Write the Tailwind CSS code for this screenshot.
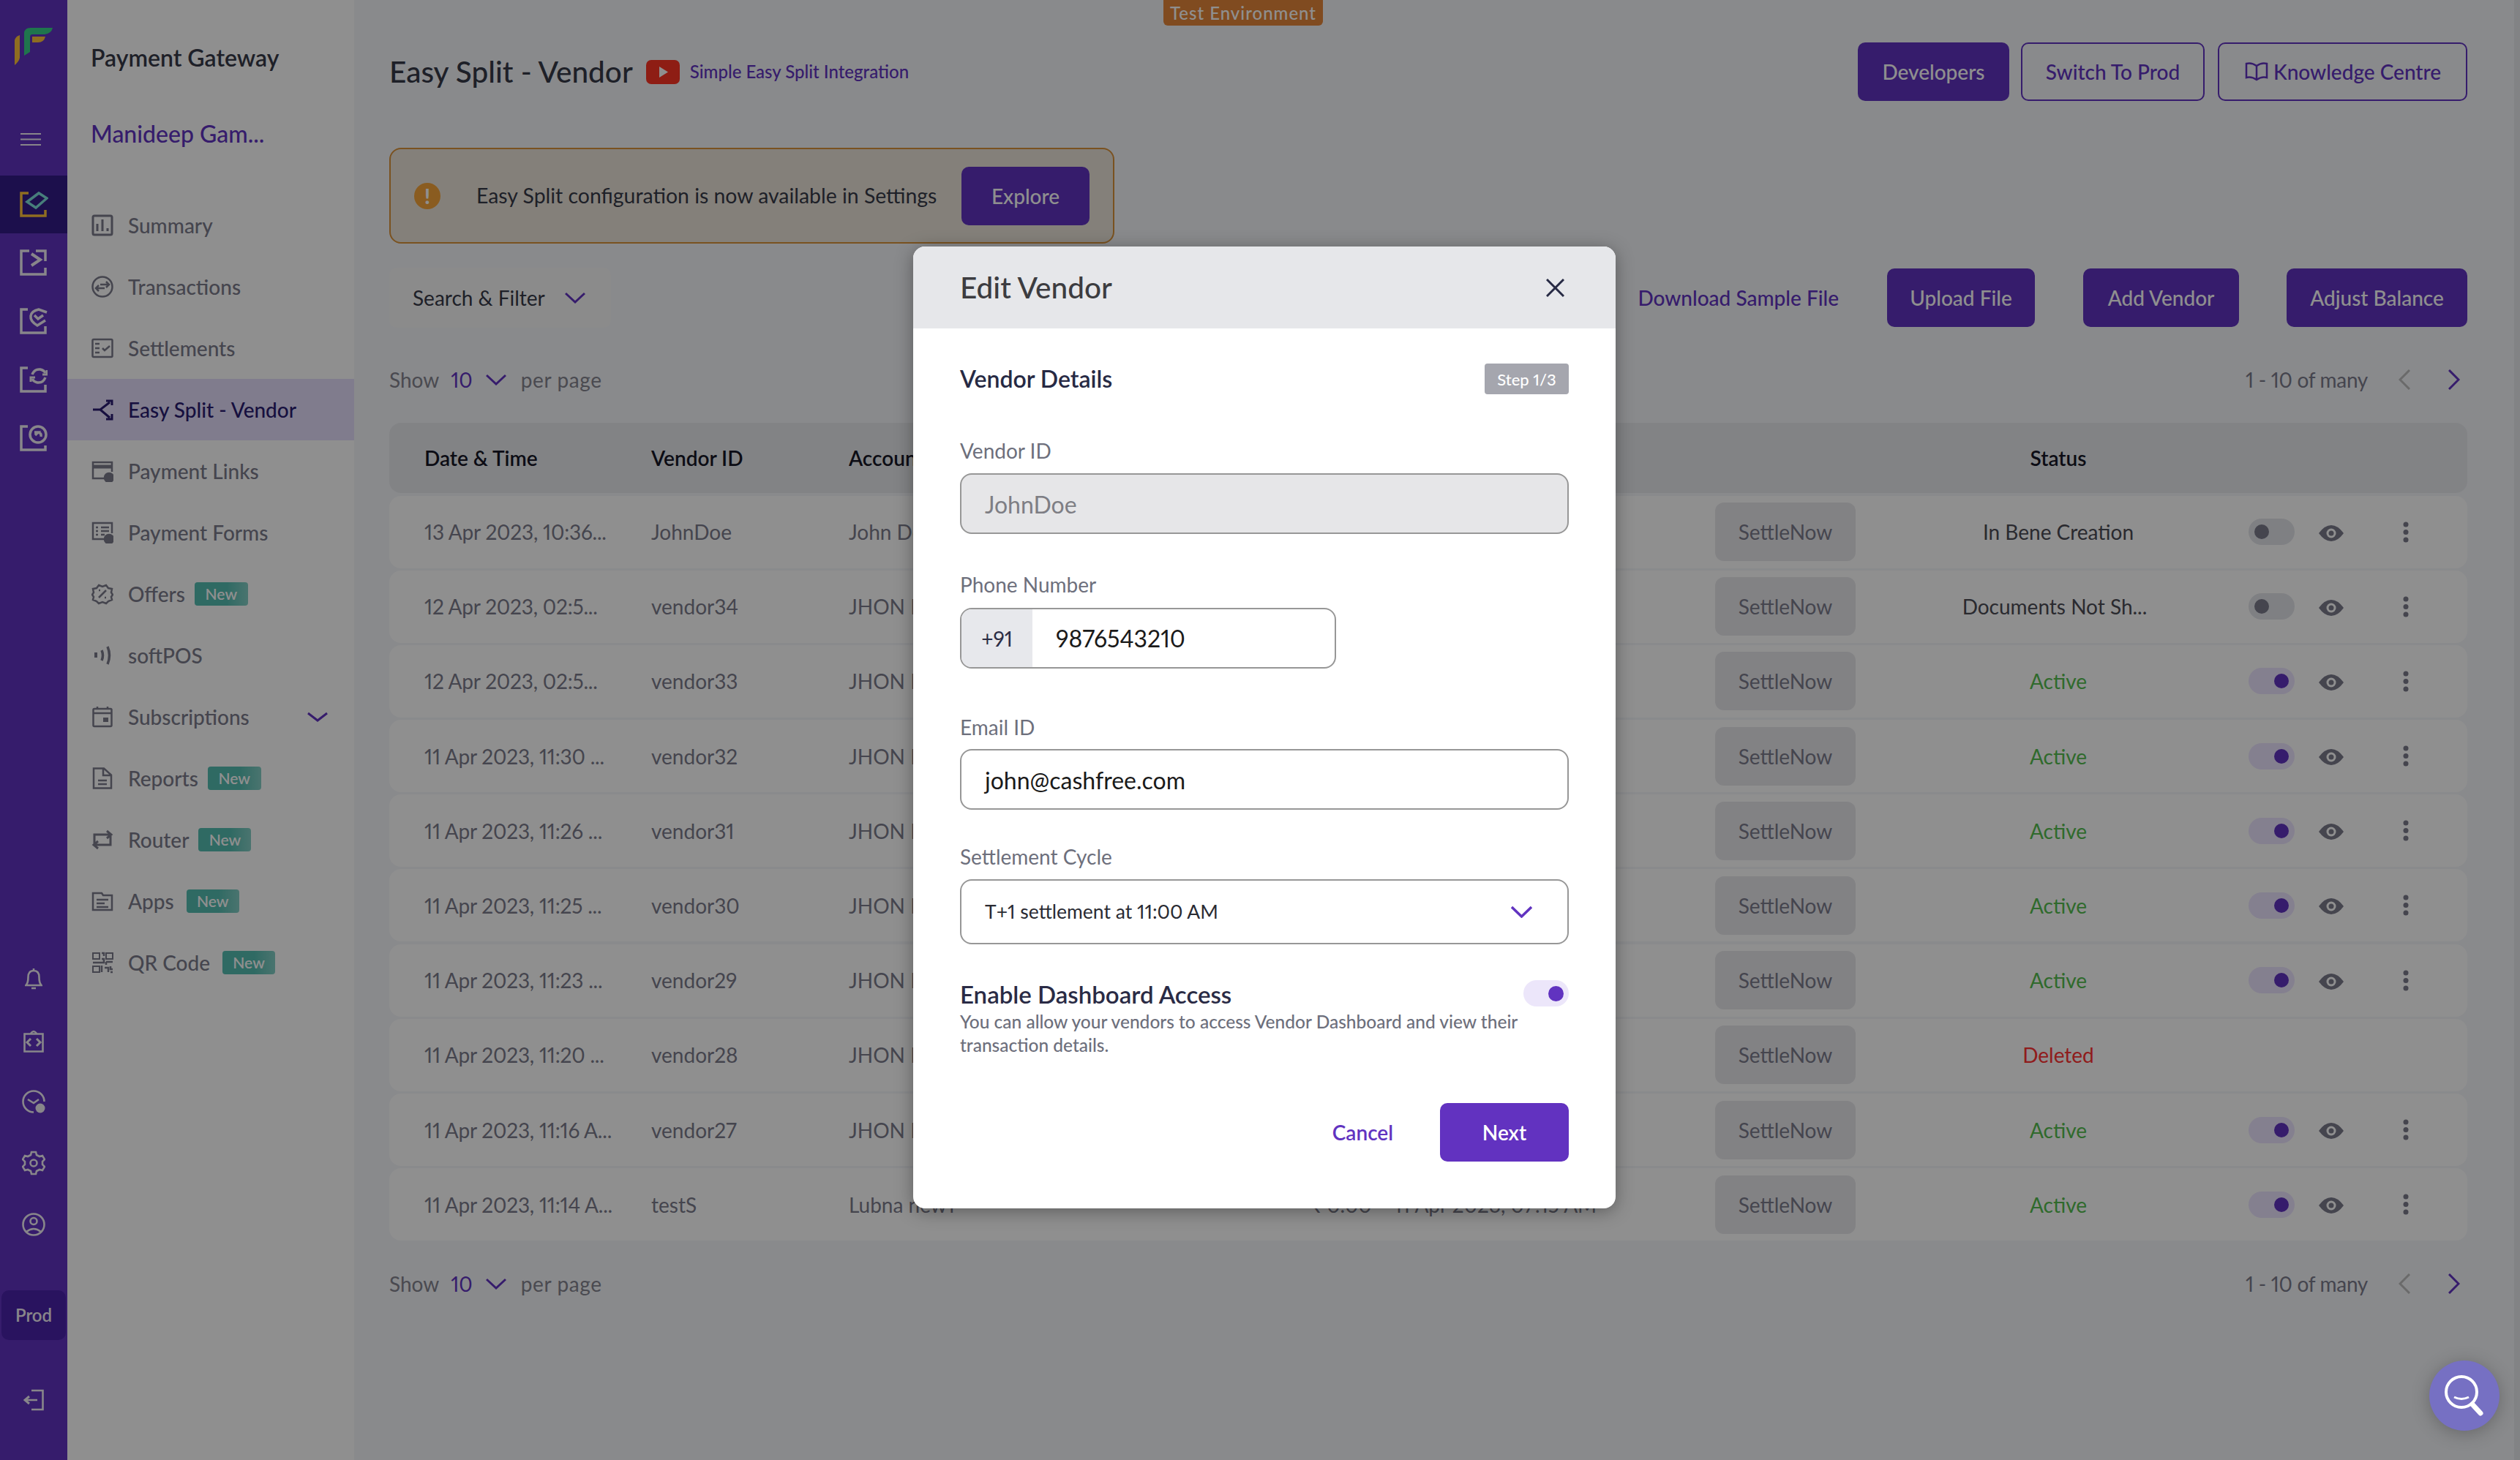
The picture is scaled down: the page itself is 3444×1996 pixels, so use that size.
<!DOCTYPE html>
<html lang="en">
<head>
    <meta charset="UTF-8">
    <meta name="viewport" content="width=device-width, initial-scale=1.0">
    <title>Easy Split - Vendor</title>
    <script src="https://cdn.jsdelivr.net/npm/@tailwindcss/browser@4"></script>
</head>
<body class="relative w-[3444px] h-[1996px] overflow-hidden flex bg-[#f5f6fa] font-['Lato','Liberation_Sans',sans-serif] proportional-nums text-[28px] text-[#7b7b8c]">

    <!-- icon rail -->
    <aside class="w-[92px] h-full bg-[#6133c0] flex flex-col shrink-0 text-[#f2eff7]">
        <svg class="ml-[20px] mt-[38px] w-[52px] h-[51px]" viewBox="0 0 52 51">
            <path d="M0 17 Q1 12 7 10 V41 Q6 46 0 51 Z" fill="#ffc23c"/>
            <path d="M13 8 Q13 0 22 0 H52 Q50 8 41 9 H24 Q21 9 21 13 V33 L13 38 Z" fill="#38d18a"/>
            <path d="M24 12 H42 Q40 20 32 20 H24 Z" fill="#ffc23c"/>
        </svg>
        <svg class="ml-[28px] mt-[92px] w-[28px] h-[19px]" viewBox="0 0 28 19" fill="none" stroke="currentColor" stroke-width="2.200"><path d="M0 2h28M0 9.500h28M0 17h28"/></svg>
        <div class="mt-[40px] h-[79px] bg-[#321b88] flex items-center justify-center">
            <svg class="w-[40px] h-[36px] -mt-[2px]" viewBox="0 0 40 36" fill="none" stroke-width="3.500"><path d="M13 3H3v31h33v-8" stroke="#ffc23c"/><path d="M11 15 27 3l11 7-15 13z" stroke="#7fe0dc"/></svg>
        </div>
        <div class="flex flex-col items-center gap-[44px] mt-[22px]">
            <svg class="w-[38px] h-[36px]" viewBox="0 0 38 36" fill="none" stroke="currentColor" stroke-width="3.500"><path d="M13 2H2v32h33v-9M22 2h13v14"/><path d="M16 6l12 8-12 8" stroke-width="4"/></svg>
            <svg class="w-[38px] h-[36px]" viewBox="0 0 38 36" fill="none" stroke="currentColor" stroke-width="3.500"><path d="M11 2H2v32h33v-9"/><path d="M37 6 26 2q-10 2-11 9t9 13l11-7"/><path d="M20 10l5 5 7-5"/></svg>
            <svg class="w-[38px] h-[36px]" viewBox="0 0 38 36" fill="none" stroke="currentColor" stroke-width="3.500"><path d="M11 2H2v32h33v-9"/><path d="M17 11q3-8 11-7 5 1 7 5M35 15q-3 8-11 7-5-1-7-5"/><path d="M31 11h6V5M21 15h-6v6" stroke-width="3"/></svg>
            <svg class="w-[38px] h-[36px]" viewBox="0 0 38 36" fill="none" stroke="currentColor" stroke-width="3.500"><path d="M11 2H2v32h33v-6"/><circle cx="25" cy="13" r="11"/><path d="M21 14l4-4h-5M25 10q5 1 4 6"/></svg>
        </div>
        <div class="mt-auto flex flex-col items-center">
            <div class="flex flex-col items-center gap-[51px]">
                <svg class="mb-[3px] w-[24px] h-[30px]" viewBox="0 0 24 30" fill="none" stroke="currentColor" stroke-width="2.600"><path d="M1.500 24q3-3 3-11 0-9 7.500-9t7.500 9q0 8 3 11zM9 28h6M12 1v3"/></svg>
                <svg class="w-[28px] h-[32px]" viewBox="0 0 28 32" fill="none" stroke="currentColor" stroke-width="2.600"><path d="M1.500 6.500h25v24h-25zM10 6q4-6 8 0"/><path d="M10 13l-5 5 5 5M18 13l5 5-5 5" stroke-width="3"/></svg>
                <svg class="w-[32px] h-[32px]" viewBox="0 0 32 32" fill="none" stroke="currentColor" stroke-width="2.600"><path d="M16 30.500A14.500 14.500 0 1 1 30.500 16"/><path d="M8 13l8 5 7-5"/><circle cx="25" cy="25" r="6.500" fill="currentColor" stroke="none"/></svg>
                <svg class="w-[32px] h-[34px]" viewBox="0 0 32 34" fill="none" stroke="currentColor" stroke-width="2.600"><path d="M13 2h6l1 4 4 2 4-1 3 5-3 3v4l3 3-3 5-4-1-4 2-1 4h-6l-1-4-4-2-4 1-3-5 3-3v-4l-3-3 3-5 4 1 4-2z"/><circle cx="16" cy="17" r="4.500"/></svg>
                <svg class="w-[32px] h-[32px]" viewBox="0 0 32 32" fill="none" stroke="currentColor" stroke-width="2.600"><circle cx="16" cy="16" r="14.500"/><circle cx="16" cy="11.500" r="4.500"/><path d="M6 26q10-8 20 0"/></svg>
            </div>
            <div class="mt-[74px] w-[88px] h-[68px] rounded-[10px] bg-[#4a22aa] flex items-center justify-center text-[24px] font-semibold">Prod</div>
            <svg class="mt-[67px] mb-[67px] w-[28px] h-[30px]" viewBox="0 0 28 30" fill="none" stroke="currentColor" stroke-width="2.600"><path d="M11 2h15.500v26H11M19 15H3"/><path d="M8 10l-6 5 6 5" stroke-width="3"/></svg>
        </div>
    </aside>

    <!-- section sidebar -->
    <nav class="w-[392px] h-full bg-white shrink-0 flex flex-col">
        <div class="pl-[32px] mt-[58px] h-[42px] flex items-center text-[32px] font-semibold text-[#373948]">Payment Gateway</div>
        <div class="pl-[32px] mt-[62px] h-[42px] flex items-center text-[32px] font-medium text-[#6133c0]">Manideep Gam...</div>
        <div class="mt-[62px] flex flex-col font-medium">
            <div class="h-[84px] pl-[33px] flex items-center gap-[20px]">
                <svg class="w-[30px] h-[30px]" viewBox="0 0 30 30" fill="none" stroke="currentColor" stroke-width="3"><rect x="2" y="2" width="26" height="26" rx="2"/><path d="M8 13v10M15 7v16M22 19v4"/></svg><span>Summary</span>
            </div>
            <div class="h-[84px] pl-[33px] flex items-center gap-[20px]">
                <svg class="w-[30px] h-[30px]" viewBox="0 0 30 30" fill="none" stroke="currentColor" stroke-width="2.500"><circle cx="15" cy="15" r="13.500"/><path d="M6 17h12M10 13l-4 4 4 4M12 12h12M20 8l4 4-4 4"/></svg><span>Transactions</span>
            </div>
            <div class="h-[84px] pl-[33px] flex items-center gap-[20px]">
                <svg class="w-[30px] h-[30px]" viewBox="0 0 30 30" fill="none" stroke="currentColor" stroke-width="2.500"><rect x="1.500" y="3" width="27" height="24" rx="1.500"/><path d="M5 9h6M5 15h6M5 21h6M15 15l3 3 7-6"/></svg><span>Settlements</span>
            </div>
            <div class="h-[84px] pl-[33px] flex items-center gap-[20px] bg-[#e4ddfc] text-[#291c70]">
                <svg class="w-[30px] h-[30px]" viewBox="0 0 30 30" fill="none" stroke="currentColor" stroke-width="3"><path d="M2 15h10l13-10M12 15l13 11M20 3h8v6M28 21v7h-8"/></svg><span>Easy Split - Vendor</span>
            </div>
            <div class="h-[84px] pl-[33px] flex items-center gap-[20px]">
                <svg class="w-[30px] h-[30px]" viewBox="0 0 30 30" fill="none" stroke="currentColor" stroke-width="2.500"><path d="M18 25H2V3h26v13M2 9h26" /><path d="M2 9h26" stroke-width="5"/><circle cx="24" cy="24" r="6" fill="currentColor"/></svg><span>Payment Links</span>
            </div>
            <div class="h-[84px] pl-[33px] flex items-center gap-[20px]">
                <svg class="w-[30px] h-[30px]" viewBox="0 0 30 30" fill="none" stroke="currentColor" stroke-width="2.500"><path d="M18 24H2V2h26v14"/><path d="M6 8h3M13 8h11M6 13h3M13 13h11M6 18h3M13 18h5"/><circle cx="24" cy="24" r="6" fill="currentColor"/></svg><span>Payment Forms</span>
            </div>
            <div class="h-[84px] pl-[33px] flex items-center gap-[20px]">
                <svg class="w-[30px] h-[30px]" viewBox="0 0 30 30" fill="none" stroke="currentColor" stroke-width="2.500"><path d="M10 3l5 2 5-2 3 4 5 1-1 5 2 3-2 3 1 4-5 2-3 3-5-2-5 2-3-3-5-2 1-4-2-3 2-3-1-5 5-1z"/><path d="M10 20l10-10M10 10h2M18 20h2"/></svg><span>Offers</span>
                <span class="-ml-[7px] w-[73px] h-[32px] rounded-[4px] bg-gradient-to-r from-[#54bdb1] from-60% to-[#84cfc6] flex items-center justify-center text-[21px] font-semibold text-white">New</span>
            </div>
            <div class="h-[84px] pl-[33px] flex items-center gap-[20px]">
                <svg class="w-[30px] h-[30px]" viewBox="0 0 30 30" fill="none" stroke="currentColor" stroke-width="3.500"><path d="M6 11v7" stroke-width="4"/><path d="M14 8q3 7 0 14M22 3q5 12 0 24"/></svg><span>softPOS</span>
            </div>
            <div class="h-[84px] pl-[33px] pr-[36px] flex items-center gap-[20px]">
                <svg class="w-[30px] h-[30px]" viewBox="0 0 30 30" fill="none" stroke="currentColor" stroke-width="2.500"><rect x="2.500" y="4" width="25" height="24" rx="1.500"/><path d="M2 10h26M8 1v4M22 1v4"/><rect x="16" y="16" width="7" height="6" fill="currentColor" stroke="none"/></svg><span>Subscriptions</span>
                <svg class="ml-auto w-[28px] h-[14px] text-[#6133c0]" viewBox="0 0 28 14" fill="none" stroke="currentColor" stroke-width="3"><path d="M1 2l13 10L27 2"/></svg>
            </div>
            <div class="h-[84px] pl-[33px] flex items-center gap-[20px]">
                <svg class="w-[30px] h-[30px]" viewBox="0 0 30 30" fill="none" stroke="currentColor" stroke-width="2.500"><path d="M3 1.500h14l10 9v18H3zM16 2v9h11M9 18h12M9 23h12"/></svg><span>Reports</span>
                <span class="-ml-[7px] w-[73px] h-[32px] rounded-[4px] bg-gradient-to-r from-[#54bdb1] from-60% to-[#84cfc6] flex items-center justify-center text-[21px] font-semibold text-white">New</span>
            </div>
            <div class="h-[84px] pl-[33px] flex items-center gap-[20px]">
                <svg class="w-[30px] h-[30px]" viewBox="0 0 30 30" fill="none" stroke="currentColor" stroke-width="3"><path d="M4 21V8h22M21 3l6 5-6 5M26 10v12H4M9 17l-6 5 6 5"/></svg><span>Router</span>
                <span class="-ml-[7px] w-[72px] h-[32px] rounded-[4px] bg-gradient-to-r from-[#54bdb1] from-60% to-[#84cfc6] flex items-center justify-center text-[21px] font-semibold text-white">New</span>
            </div>
            <div class="h-[84px] pl-[33px] flex items-center gap-[20px]">
                <svg class="w-[30px] h-[30px]" viewBox="0 0 30 30" fill="none" stroke="currentColor" stroke-width="2.500"><path d="M2 4h12l2 3h12v20H2zM7 13h16M7 18h11M7 23h16"/></svg><span>Apps</span>
                <span class="-ml-[3px] w-[72px] h-[32px] rounded-[4px] bg-gradient-to-r from-[#54bdb1] from-60% to-[#84cfc6] flex items-center justify-center text-[21px] font-semibold text-white">New</span>
            </div>
            <div class="h-[84px] pl-[33px] flex items-center gap-[20px]">
                <svg class="w-[30px] h-[30px]" viewBox="0 0 30 30" fill="none" stroke="currentColor" stroke-width="2"><rect x="2" y="2" width="9" height="8"/><rect x="20" y="2" width="9" height="8"/><rect x="2" y="20" width="9" height="8"/><path d="M14 2h3v4M14 10h3v5H2M20 14h9M20 14v4M14 19v9M18 22h5v6M26 20v4h3M26 28h3" stroke-width="2.500"/></svg><span>QR Code</span>
                <span class="-ml-[3px] w-[72px] h-[32px] rounded-[4px] bg-gradient-to-r from-[#54bdb1] from-60% to-[#84cfc6] flex items-center justify-center text-[21px] font-semibold text-white">New</span>
            </div>
        </div>
    </nav>

    <!-- main column -->
    <main class="flex-1 pl-[48px] pr-[64px] pt-[58px] min-w-0">
        <div class="flex items-center justify-between h-[80px]">
            <div class="flex items-center">
                <h1 class="text-[40.500px] font-medium text-[#373948]">Easy Split - Vendor</h1>
                <svg class="ml-[18px] w-[46px] h-[33px]" viewBox="0 0 46 33"><rect width="46" height="33" rx="7" fill="#fe3424"/><path d="M18 9l12 7.500L18 24z" fill="#fff"/></svg>
                <a class="ml-[14px] text-[24px] font-medium text-[#6133c0]">Simple Easy Split Integration</a>
            </div>
            <div class="flex items-center font-medium">
                <button class="w-[207px] h-[80px] rounded-[10px] bg-[#6133c0] text-white">Developers</button>
                <button class="ml-[16px] w-[251px] h-[80px] rounded-[10px] border-2 border-[#6133c0] text-[#6133c0]">Switch To Prod</button>
                <button class="ml-[18px] w-[341px] h-[80px] rounded-[10px] border-2 border-[#6133c0] text-[#6133c0] flex items-center justify-center gap-[6px]">
                    <svg class="w-[34px] h-[28px]" viewBox="0 0 34 28" fill="none" stroke="currentColor" stroke-width="2.500"><path d="M17 6Q10 1 3 3v19q7-2 14 3 7-5 14-3V3q-7-2-14 3zM17 6v19"/></svg>Knowledge Centre
                </button>
            </div>
        </div>

        <div class="mt-[64px] w-[991px] h-[131px] rounded-[16px] border-2 border-[#da9239] bg-[#ece5da] flex items-center">
            <span class="ml-[32px] w-[36px] h-[36px] rounded-full bg-[#f6a439] flex items-center justify-center text-[28px] font-black text-white">!</span>
            <span class="ml-[49px] text-[28.400px] text-[#373948]">Easy Split configuration is now available in Settings</span>
            <button class="ml-auto mr-[32px] w-[175px] h-[80px] rounded-[10px] bg-[#6133c0] text-white font-medium">Explore</button>
        </div>

        <div class="mt-[33px] h-[82px] flex items-center">
            <div class="w-[303px] h-[82px] rounded-[10px] bg-[#f8f8f8] flex items-center pl-[32px] text-[#373948]">
                Search &amp; Filter
                <svg class="ml-[27px] w-[28px] h-[16px] text-[#6133c0]" viewBox="0 0 28 16" fill="none" stroke="currentColor" stroke-width="3"><path d="M1 2l13 12L27 2"/></svg>
            </div>
            <a class="ml-auto text-[#6133c0] font-medium">Download Sample File</a>
            <button class="ml-[66px] w-[202px] h-[80px] rounded-[10px] bg-[#6133c0] text-white font-medium">Upload File</button>
            <button class="ml-[66px] w-[213px] h-[80px] rounded-[10px] bg-[#6133c0] text-white font-medium">Add Vendor</button>
            <button class="ml-[65px] w-[247px] h-[80px] rounded-[10px] bg-[#6133c0] text-white font-medium">Adjust Balance</button>
        </div>

        <div class="mt-[51px] h-[40px] flex items-center text-[#84848f]">
            <span>Show</span><span class="ml-[16px] text-[#6133c0]">10</span>
            <svg class="ml-[18px] w-[28px] h-[16px] text-[#6133c0]" viewBox="0 0 28 16" fill="none" stroke="currentColor" stroke-width="3"><path d="M1 2l13 12L27 2"/></svg>
            <span class="ml-[20px] tracking-[0.600px]">per page</span>
            <span class="ml-auto tracking-[-0.300px] text-[#7b7b8c]">1 - 10 of many</span>
            <svg class="ml-[42px] w-[16px] h-[28px] text-[#bdbdbd]" viewBox="0 0 16 28" fill="none" stroke="currentColor" stroke-width="3"><path d="M15 1 2 14l13 13"/></svg>
            <svg class="ml-[52px] mr-[10px] w-[16px] h-[28px] text-[#6133c0]" viewBox="0 0 16 28" fill="none" stroke="currentColor" stroke-width="3"><path d="M1 1l13 13L1 27"/></svg>
        </div>

        <div class="mt-[39px] h-[96px] rounded-[16px] bg-[#e8eaee] grid grid-cols-[48px_310px_270px_630px_115px_439px_216px_506px_1fr] items-center font-semibold text-[#161726]">
            <span></span><span>Date &amp; Time</span><span>Vendor ID</span><span class="w-[88px] overflow-hidden whitespace-nowrap">Account Name</span><span></span><span></span><span></span><span class="text-center">Status</span><span></span>
        </div>
        <div id="vendorRows" class="mt-[3.500px] flex flex-col gap-[3.200px]"></div>

        <div class="mt-[39px] h-[40px] flex items-center text-[#84848f]">
            <span>Show</span><span class="ml-[16px] text-[#6133c0]">10</span>
            <svg class="ml-[18px] w-[28px] h-[16px] text-[#6133c0]" viewBox="0 0 28 16" fill="none" stroke="currentColor" stroke-width="3"><path d="M1 2l13 12L27 2"/></svg>
            <span class="ml-[20px] tracking-[0.600px]">per page</span>
            <span class="ml-auto tracking-[-0.300px] text-[#7b7b8c]">1 - 10 of many</span>
            <svg class="ml-[42px] w-[16px] h-[28px] text-[#bdbdbd]" viewBox="0 0 16 28" fill="none" stroke="currentColor" stroke-width="3"><path d="M15 1 2 14l13 13"/></svg>
            <svg class="ml-[52px] mr-[10px] w-[16px] h-[28px] text-[#6133c0]" viewBox="0 0 16 28" fill="none" stroke="currentColor" stroke-width="3"><path d="M1 1l13 13L1 27"/></svg>
        </div>
    </main>
    <div class="w-[8px] h-full bg-[#e8eaee] shrink-0"></div>

    <!-- test tag + backdrop -->
    <div class="absolute left-[1590px] top-0 w-[218px] h-[35px] rounded-b-[6px] bg-[#e58639] flex items-center justify-center text-[24px] font-medium tracking-[1px] text-white">Test Environment</div>
    <div class="absolute inset-0 bg-black/[0.44]"></div>

    <!-- edit vendor modal -->
    <section class="absolute left-[1248px] top-[337px] w-[960px] h-[1315px] rounded-[16px] bg-white overflow-hidden shadow-[0_4px_24px_rgba(0,0,0,0.35)]">
        <header class="h-[112px] bg-[#e6e7ea] flex items-center justify-between pl-[64px] pr-[70px]">
            <h2 class="text-[40.500px] font-medium text-[#3c3c40]">Edit Vendor</h2>
            <svg class="w-[25px] h-[25px]" viewBox="0 0 25 25" fill="none" stroke="#272a44" stroke-width="3"><path d="M1 1l23 23M24 1 1 24"/></svg>
        </header>
        <div class="px-[64px]">
            <div class="mt-[48px] h-[42px] flex items-center justify-between">
                <h3 class="text-[32px] font-semibold text-[#272a44]">Vendor Details</h3>
                <span class="w-[115px] h-[42px] rounded-[4px] bg-[#a5a6ae] flex items-center justify-center text-[22px] font-medium text-white">Step 1/3</span>
            </div>
            <label class="mt-[59px] h-[36px] flex items-center text-[#6d6f7c]">Vendor ID</label>
            <div class="mt-[13px] h-[83px] rounded-[16px] border-2 border-[#979797] bg-[#e6e6e8] flex items-center pl-[32px] pt-[2px] text-[32px] text-[#7e7e84]">JohnDoe</div>
            <label class="mt-[51px] h-[36px] flex items-center text-[#6d6f7c]">Phone Number</label>
            <div class="mt-[14px] w-[514px] h-[83px] rounded-[16px] border-2 border-[#979797] flex overflow-hidden">
                <span class="w-[97px] bg-[#e7e8ec] flex items-center justify-center text-[#2b2d45]">+91</span>
                <span class="pl-[32px] flex items-center text-[32px] text-[#1a1a1a]">9876543210</span>
            </div>
            <label class="mt-[62px] h-[36px] flex items-center text-[#6d6f7c]">Email ID</label>
            <div class="mt-[12px] h-[83px] rounded-[16px] border-2 border-[#979797] flex items-center pl-[32px] pt-[2px] text-[32px] text-[#1a1a1a]">john@cashfree.com</div>
            <label class="mt-[46px] h-[36px] flex items-center text-[#6d6f7c]">Settlement Cycle</label>
            <div class="mt-[13px] h-[89px] rounded-[16px] border-2 border-[#979797] flex items-center pl-[32px] pr-[48px] text-[26.500px] text-[#2a2b33]">
                T+1 settlement at 11:00 AM
                <svg class="ml-auto w-[29px] h-[17px] text-[#6133c0]" viewBox="0 0 29 17" fill="none" stroke="currentColor" stroke-width="3.500"><path d="M1 2l13.500 13L28 2"/></svg>
            </div>
            <div class="mt-[49px] flex justify-between">
                <div class="w-[780px]">
                    <h4 class="h-[40px] flex items-center text-[33px] font-semibold text-[#2a2b45]">Enable Dashboard Access</h4>
                    <p class="mt-[1px] text-[24.500px] leading-[32px] font-medium text-[#6d6f7c]">You can allow your vendors to access Vendor Dashboard and view their transaction details.</p>
                </div>
                <div class="w-[63px] h-[36px] rounded-full bg-[#ece6fa] flex items-center justify-end pr-[7px]"><span class="w-[21px] h-[21px] rounded-full bg-[#6133c0]"></span></div>
            </div>
            <div class="mt-[63px] flex items-center justify-end">
                <button class="font-semibold text-[#6133c0]">Cancel</button>
                <button class="ml-[64px] w-[176px] h-[80px] rounded-[10px] bg-[#6232c0] font-semibold text-white">Next</button>
            </div>
        </div>
    </section>

    <!-- floating search widget, stays above the backdrop -->
    <div class="absolute left-[3320px] top-[1860px] w-[96px] h-[96px] rounded-full bg-[#7670c3] shadow-[0_4px_24px_rgba(0,0,0,0.25)] flex items-center justify-center">
        <svg class="w-[58px] h-[58px]" viewBox="0 0 58 58" fill="none" stroke="#fff"><circle cx="25" cy="24" r="21" stroke-width="4"/><path d="M15 31q10 5 20 0" stroke-width="3"/><path d="M40 41l11 12" stroke-width="7" stroke-linecap="round"/></svg>
    </div>

    <script>
        // rows 1-9 have their amount and settled date fully behind the modal, only row 10 peeks out
        const vendors = [
            ['13 Apr 2023, 10:36...', 'JohnDoe', 'John Doe', 'In Bene Creation', 'off'],
            ['12 Apr 2023, 02:5...', 'vendor34', 'JHON DOE', 'Documents Not Sh...', 'off'],
            ['12 Apr 2023, 02:5...', 'vendor33', 'JHON DOE', 'Active', 'on'],
            ['11 Apr 2023, 11:30 ...', 'vendor32', 'JHON DOE', 'Active', 'on'],
            ['11 Apr 2023, 11:26 ...', 'vendor31', 'JHON DOE', 'Active', 'on'],
            ['11 Apr 2023, 11:25 ...', 'vendor30', 'JHON DOE', 'Active', 'on'],
            ['11 Apr 2023, 11:23 ...', 'vendor29', 'JHON DOE', 'Active', 'on'],
            ['11 Apr 2023, 11:20 ...', 'vendor28', 'JHON DOE', 'Deleted', null],
            ['11 Apr 2023, 11:16 A...', 'vendor27', 'JHON DOE', 'Active', 'on'],
            ['11 Apr 2023, 11:14 A...', 'testS', 'Lubna new1', 'Active', 'on', '₹ 0.00', '11 Apr 2023, 07:15 AM']
        ];
        const statusClass = { 'Active': 'text-[#54bd4f]', 'Deleted': 'text-[#ff3232]', 'Documents Not Sh...': 'pr-[10px] text-[#4b4b54]' };
        const eye = '<svg class="ml-[33px] mt-[3px] w-[34px] h-[22px]" viewBox="0 0 34 22"><path d="M0 11Q8 0 17 0t17 11Q26 22 17 22T0 11z" fill="currentColor"/><circle cx="17" cy="11" r="6.500" fill="#fff"/><circle cx="17" cy="11" r="3.500" fill="currentColor"/></svg>';
        const dots = '<svg class="ml-[81px] w-[8px] h-[29px]" viewBox="0 0 8 29" fill="currentColor"><circle cx="4" cy="4" r="3.500"/><circle cx="4" cy="14.500" r="3.500"/><circle cx="4" cy="25" r="3.500"/></svg>';

        document.getElementById('vendorRows').innerHTML = vendors.map(([date, id, name, status, toggle, amount = '', settled = '']) => {
            let actions = '';
            if (toggle) {
                const track = toggle === 'on'
                    ? '<span class="ml-[7px] w-[63px] h-[36px] rounded-full bg-[#ece4ff] flex items-center justify-end pr-[8px]"><span class="w-[20px] h-[20px] rounded-full bg-[#6133c0]"></span></span>'
                    : '<span class="ml-[7px] w-[63px] h-[36px] rounded-full bg-[#e3e5ea] flex items-center pl-[8px]"><span class="w-[20px] h-[20px] rounded-full bg-[#7b7b8c]"></span></span>';
                actions = track + eye + dots;
            }
            return `<div class="h-[99px] rounded-[16px] bg-white grid grid-cols-[48px_310px_270px_630px_115px_439px_216px_506px_1fr] items-center">
                <span></span><span class="tracking-[-0.200px]">${date}</span><span>${id}</span><span>${name}</span><span>${amount}</span><span>${settled}</span>
                <span><button class="w-[192px] h-[80px] rounded-[12px] bg-[#e8e8ec]">SettleNow</button></span>
                <span class="text-center ${statusClass[status] || 'text-[#4b4b54]'}">${status}</span>
                <span class="flex items-center">${actions}</span>
            </div>`;
        }).join('');
    </script>
</body>
</html>
